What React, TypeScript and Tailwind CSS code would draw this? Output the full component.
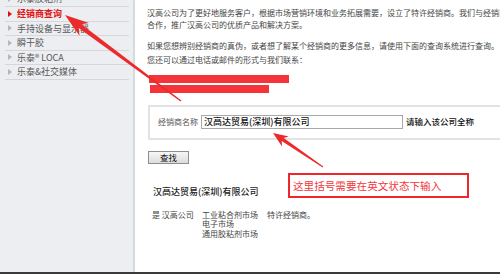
import React from "react";

type Pt = [number, number];

// tapered "snipping tool" arrow: tip, tail, head length, head half-width, shaft half-width near head / at tail
function arrowPoints(tip: Pt, tail: Pt, headLen: number, headHalf: number, shaftHead: number, shaftTail: number) {
  const dx = tail[0] - tip[0];
  const dy = tail[1] - tip[1];
  const len = Math.hypot(dx, dy);
  const ux = dx / len;
  const uy = dy / len;
  const nx = -uy;
  const ny = ux;
  const at = (d: number, w: number): string =>
    `${(tip[0] + ux * d + nx * w).toFixed(1)},${(tip[1] + uy * d + ny * w).toFixed(1)}`;
  const notch = headLen * 0.78;
  return [
    at(0, 0),
    at(headLen, headHalf),
    at(notch, shaftHead),
    at(len, shaftTail),
    at(len, -shaftTail),
    at(notch, -shaftHead),
    at(headLen, -headHalf),
  ].join(" ");
}

const sideItems = [
  { label: "乐泰胶粘剂", active: false },
  { label: "经销商查询", active: true },
  { label: "手持设备与显示器", active: false },
  { label: "瞬干胶", active: false },
  { label: "乐泰® LOCA", active: false },
  { label: "乐泰&社交媒体", active: false },
];

export default function App() {
  return (
    <div className="relative w-[500px] h-[274px] overflow-hidden bg-white font-['Noto_Sans_CJK_SC','Liberation_Sans',sans-serif]">
      <div className="flex h-[272px]">
        {/* left nav */}
        <div className="w-[135px] shrink-0 bg-[#eceef1] border-r-2 border-[#d6d9dd]">
          <div className="-mt-[8.5px] pl-[5px] pr-[4px]">
            {sideItems.map((it, i) => (
              <div
                key={it.label}
                className={`${i === 0 ? "h-[15.5px]" : "h-[14.5px]"} border-b border-[#d5d7db] flex items-center`}
              >
                <span
                  className={`ml-[3px] w-0 h-0 border-y-[3px] border-y-transparent border-l-[4px] ${
                    it.active ? "border-l-[#e01010]" : "border-l-[#b4b6b9]"
                  }`}
                />
                <span
                  className={`ml-[5px] text-[9px] leading-none whitespace-nowrap ${
                    it.active ? "text-[#e01414] font-bold" : "text-[#585858]"
                  }`}
                >
                  {it.label}
                </span>
              </div>
            ))}
          </div>
        </div>

        {/* content */}
        <div className="flex-1 overflow-hidden pl-[12px] pt-[7px] text-[8px] leading-[11.5px] text-[#444]">
          <div className="whitespace-nowrap">汉高公司为了更好地服务客户，根据市场营销环境和业务拓展需要，设立了特许经销商。我们与经销商</div>
          <div className="whitespace-nowrap">合作，推广汉高公司的优质产品和解决方案。</div>
          <div className="mt-[9.5px] whitespace-nowrap">如果您想辨别经销商的真伪，或者想了解某个经销商的更多信息，请使用下面的查询系统进行查询。</div>
          <div className="mt-[3px] whitespace-nowrap">您还可以通过电话或邮件的形式与我们联系：</div>

          <div className="mt-[9px] ml-[2px] w-[140px] h-[8px] bg-[#f5343a]" />
          <div className="mt-[2px] ml-[3px] w-[119px] h-[8px] bg-[#f5343a]" />

          <div className="mt-[12px] ml-[1px] w-[380px] h-[35px] border-2 border-[#e3e3e3] flex items-center pl-[8px]">
            <span className="w-[40px] text-[8px] text-[#555] whitespace-nowrap">经销商名称</span>
            <div className="ml-[3px] w-[202px] h-[14px] border border-[#a8a8a8] flex items-center px-[2px] text-[9px] font-medium text-[#111] whitespace-nowrap">
              汉高达贸易(深圳)有限公司
            </div>
            <span className="ml-[3px] text-[8.5px] font-medium text-[#111] whitespace-nowrap">请输入该公司全称</span>
          </div>

          <button className="mt-[11px] ml-[1px] w-[41px] h-[13px] border border-[#8e8e8e] bg-gradient-to-b from-[#f7f7f7] to-[#dcdcdc] text-[8.5px] leading-none text-[#111] flex items-center justify-center">
            查找
          </button>

          <div className="mt-[22px] ml-[6px] text-[9px] font-medium text-[#222] whitespace-nowrap">汉高达贸易(深圳)有限公司</div>

          <div className="mt-[12.5px] ml-[5px] flex text-[8px] leading-[9.5px] text-[#444]">
            <span className="w-[50px] whitespace-nowrap">是 汉高公司</span>
            <div className="w-[65px] flex flex-col whitespace-nowrap">
              <span>工业粘合剂市场</span>
              <span>电子市场</span>
              <span>通用胶粘剂市场</span>
            </div>
            <span className="whitespace-nowrap">特许经销商。</span>
          </div>
        </div>
      </div>
      <div className="h-[2px] bg-[#3a3a3a]" />

      {/* annotation overlay */}
      <div className="absolute left-[288px] top-[173px] w-[181px] h-[25px] border-2 border-[#f0262b] bg-white flex items-center pl-[3px] text-[10.6px] text-[#f2383c] whitespace-nowrap">
        这里括号需要在英文状态下输入
      </div>
      <svg className="absolute inset-0 pointer-events-none" width="500" height="274" viewBox="0 0 500 274">
        <polygon points={arrowPoints([65, 15], [181, 101], 24, 8, 2.3, 0.6)} fill="#ec2a2c" />
        <polygon points={arrowPoints([273, 133], [323, 167], 15, 6, 1.8, 0.5)} fill="#ec2a2c" />
      </svg>
    </div>
  );
}
